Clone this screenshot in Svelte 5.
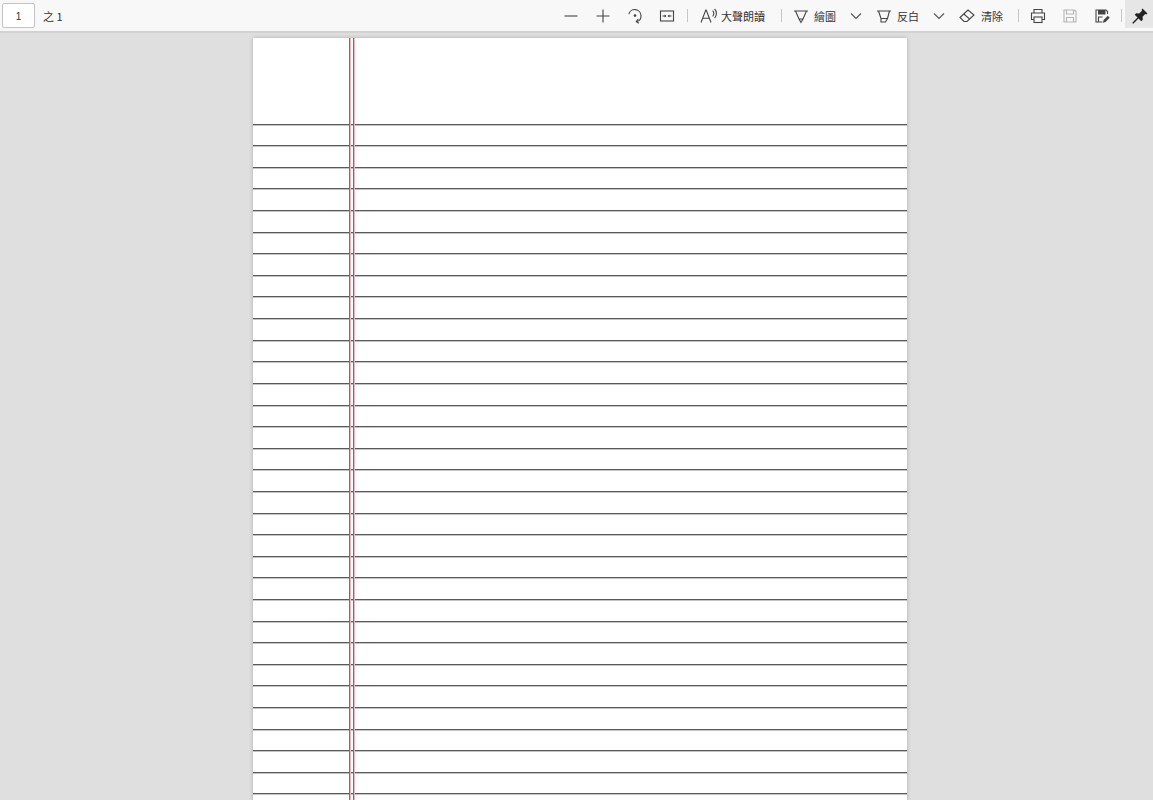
<script>
  const rows = Array.from({ length: 33 }, (_, i) => i);
</script>

<div class="viewer">
  <div class="toolbar">
    <div class="page-input">1</div>
    <span class="page-count">之 1</span>
    <div class="spacer"></div>

    <button class="icon" aria-label="縮小">
      <svg width="16" height="16" viewBox="0 0 16 16"><path d="M1.5 8h13" /></svg>
    </button>
    <button class="icon" aria-label="放大">
      <svg width="16" height="16" viewBox="0 0 16 16"><path d="M1.5 8h13M8 1.5v13" /></svg>
    </button>
    <button class="icon" aria-label="旋轉">
      <svg width="16" height="16" viewBox="0 0 16 16">
        <path d="M1.8 6.2A6.2 6.2 0 0 1 14 7.5a6 6 0 0 1-4.6 6.2" />
        <path d="M11.2 11.2l-1.9 2.5 2.6 1.6" />
        <circle cx="8" cy="7.6" r="1.3" class="solid" />
      </svg>
    </button>
    <button class="icon" aria-label="調整為頁寬">
      <svg width="16" height="16" viewBox="0 0 16 16">
        <rect x="1.5" y="3" width="13" height="10" />
        <path d="M3.5 8h3M9.5 8h3" />
        <path d="M5.5 6.5V9.5L7.5 8zM10.5 6.5V9.5L8.5 8z" class="solid" />
      </svg>
    </button>
    <span class="sep first"></span>

    <button class="tool read">
      <svg width="20" height="16" viewBox="0 0 20 16">
        <path d="M1 14.5L5.8 2h.4l4.8 12.5M2.8 10.2h6.4" />
        <path d="M12.6 2.6c1.6 1.5 1.6 4.3 0 5.8M14.6 1c2.4 2.4 2.4 6.6 0 9" />
      </svg>
      <span>大聲朗讀</span>
    </button>
    <span class="sep"></span>

    <button class="tool draw">
      <svg width="16" height="16" viewBox="0 0 16 16">
        <path d="M1 3h14M2.5 3L6 11l2 3.5L10 11l3.500-8M6 11h4" />
      </svg>
      <span>繪圖</span>
    </button>
    <button class="chevron" aria-label="繪圖選項">
      <svg width="12" height="8" viewBox="0 0 12 8"><path d="M1 1.5l5 5 5-5" /></svg>
    </button>
    <button class="tool mark">
      <svg width="16" height="16" viewBox="0 0 16 16">
        <path d="M1 3h14M2.5 3L5 10.5h6.500L13.500 3M5 10.5V14h4.500l2-3.500" />
      </svg>
      <span>反白</span>
    </button>
    <button class="chevron" aria-label="反白選項">
      <svg width="12" height="8" viewBox="0 0 12 8"><path d="M1 1.5l5 5 5-5" /></svg>
    </button>
    <button class="tool erase">
      <svg width="16" height="16" viewBox="0 0 16 16">
        <path d="M1 9.5L9 2l6 5-7 6.5H5z" />
        <path d="M4.8 6l6 5.2" />
      </svg>
      <span>清除</span>
    </button>
    <span class="sep after-erase"></span>

    <button class="icon" aria-label="列印">
      <svg width="16" height="16" viewBox="0 0 16 16">
        <path d="M4 5V1.5h8V5M4 11.5H1.500V5h13v6.500H12" />
        <rect x="4" y="9" width="8" height="5.5" />
      </svg>
    </button>
    <button class="icon disabled" aria-label="儲存">
      <svg width="16" height="16" viewBox="0 0 16 16">
        <path d="M2 2h10.5L14 3.500V14H2z" />
        <path d="M4.5 2v4h7V2M4.5 14V9.500h7V14" />
      </svg>
    </button>
    <button class="icon" aria-label="另存新檔">
      <svg width="16" height="16" viewBox="0 0 16 16">
        <path d="M8.5 14H2V2h10l1.500 1.500V6" />
        <path d="M4 2v4.500h7.500V2z" class="solid" />
        <path d="M4.5 14V9h4" />
        <path d="M9 14.8l.6-2.800 4.200-4.200 1.900 1.900-4.200 4.200z" class="solid" />
      </svg>
    </button>
    <span class="sep after-save"></span>

    <button class="pin" aria-label="釘選工具列">
      <svg width="16" height="16" viewBox="0 0 16 16">
        <path d="M10.500 .5l5 5-1.300.9-1-.4-2.600 2.800.2 3L9.300 13.300 6.500 10.500 1.500 15.500 .5 15.500 .5 14.500 5.500 9.500 2.700 6.700 4.200 5.200l3 .2L10 2.800l-.4-1z" class="solid dark" />
      </svg>
    </button>
  </div>

  <div class="canvas">
    <div class="paper">
      <div class="header"></div>
      {#each rows as row (row)}
        <div class="row"></div>
      {/each}
      <div class="margin-line one"></div>
      <div class="margin-line two"></div>
    </div>
  </div>
</div>

<style>
  :global(body) {
    background: #dfdfdf;
    overflow: hidden;
  }
  .viewer {
    height: 800px;
    overflow: hidden;
    font-family: "Noto Sans CJK TC", "Liberation Sans", sans-serif;
    color: #333;
  }
  .toolbar {
    box-sizing: border-box;
    height: 33px;
    display: flex;
    align-items: center;
    background: #f8f8f8;
    border-bottom: 2px solid #d2d2d2;
    font-size: 11px;
  }
  .page-input {
    box-sizing: border-box;
    width: 33px;
    height: 25px;
    margin-left: 2px;
    border: 1px solid #c4c4c4;
    border-radius: 2px;
    background: #fff;
    text-align: center;
    line-height: 25px;
    font-family: "Liberation Sans", sans-serif;
    font-size: 10px;
  }
  .page-count {
    margin-left: 8px;
    font-size: 11px;
  }
  .spacer {
    flex: 1;
  }
  button {
    border: 0;
    padding: 0;
    background: none;
    font: inherit;
    color: inherit;
    display: flex;
    align-items: center;
    height: 31px;
  }
  svg {
    display: block;
    fill: none;
    stroke: #444;
    stroke-width: 1.1;
  }
  svg .solid {
    fill: #444;
    stroke: none;
  }
  svg .dark {
    fill: #222;
  }
  .icon {
    width: 32px;
    justify-content: center;
  }
  .disabled svg {
    stroke: #b4b4b4;
  }
  .sep {
    width: 1px;
    height: 13px;
    margin: 0 11px 0 0;
    background: #c6c6c6;
  }
  .sep.first {
    margin: 0 12px 0 4px;
  }
  .tool {
    gap: 5px;
  }
  .read {
    gap: 1px;
    margin-right: 16px;
  }
  .chevron {
    width: 12px;
    margin: 0 14px;
    justify-content: center;
  }
  .chevron svg {
    stroke: #555;
  }
  .erase {
    gap: 6px;
  }
  .sep.after-erase {
    margin: 0 3px 0 15px;
  }
  .sep.after-save {
    margin: 0 3px;
  }
  .pin {
    width: 28px;
    height: 28px;
    padding: 3px 0 0 2px;
    justify-content: center;
    align-self: flex-start;
    background: #e6e6e6;
  }
  .canvas {
    display: flex;
    justify-content: center;
    padding: 5px 0 0 7px;
  }
  .paper {
    position: relative;
    width: 654px;
    background: #fff;
    box-shadow: 0 0 4px rgba(0, 0, 0, 0.22);
  }
  .header {
    height: 85.6px;
  }
  .row {
    box-sizing: border-box;
    height: 21.62px;
    border-top: 1px solid #5a5a5a;
    box-shadow: inset 0 1px 0 #c4c4c4;
  }
  .margin-line {
    position: absolute;
    top: 0;
    bottom: 0;
    width: 1px;
    background: #c04f63;
    box-shadow: 1px 0 0 #e6b8c0;
  }
  .one {
    left: 96px;
  }
  .two {
    left: 100px;
  }
</style>
